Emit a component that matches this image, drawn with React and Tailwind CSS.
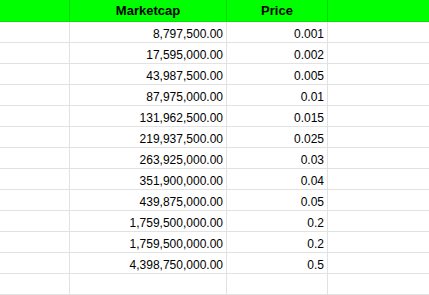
import React from 'react'

const rows = [
  ["8,797,500.00", "0.001"],
  ["17,595,000.00", "0.002"],
  ["43,987,500.00", "0.005"],
  ["87,975,000.00", "0.01"],
  ["131,962,500.00", "0.015"],
  ["219,937,500.00", "0.025"],
  ["263,925,000.00", "0.03"],
  ["351,900,000.00", "0.04"],
  ["439,875,000.00", "0.05"],
  ["1,759,500,000.00", "0.2"],
  ["1,759,500,000.00", "0.2"],
  ["4,398,750,000.00", "0.5"],
  ["", ""],
]

const App = () => {
  return (
    <div className="w-[429px] h-[295px] overflow-hidden bg-white font-['Liberation_Sans',Arial,sans-serif] text-black">
      {/* header row */}
      <div className="grid grid-cols-[70px_157px_101px_1fr] h-[22px] bg-[#00ff00] border-b border-[#00e600]">
        <div className="border-r border-[#00d900]"></div>
        <div className="border-r border-[#00d900] flex items-center justify-center text-[13px] font-bold">Marketcap</div>
        <div className="border-r border-[#00d900] flex items-center justify-center text-[13px] font-bold">Price</div>
        <div></div>
      </div>

      {/* data rows */}
      {rows.map((row, idx) => (
        <div key={idx} className="grid grid-cols-[70px_157px_101px_1fr] h-[21px] border-b border-[#e2e2e2] text-[12px] leading-[14px]">
          <div className="border-r border-[#e2e2e2]"></div>
          <div className="border-r border-[#e2e2e2] flex items-end justify-end pr-[3px] pb-[1px]">{row[0]}</div>
          <div className="border-r border-[#e2e2e2] flex items-end justify-end pr-[3px] pb-[1px]">{row[1]}</div>
          <div></div>
        </div>
      ))}
    </div>
  )
}

export default App
